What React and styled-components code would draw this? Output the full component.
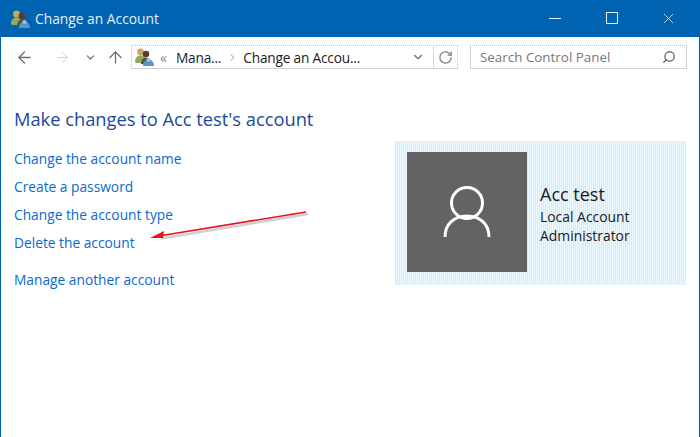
import React from "react";
import styled, { createGlobalStyle } from "styled-components";
import { ArrowLeft, ArrowRight, ArrowUp, ChevronDown, ChevronRight, RotateCw, Search, X } from "lucide-react";

const GlobalStyle = createGlobalStyle`
  html, body { margin: 0; padding: 0; background: #fff; }
  body { font-family: "Open Sans", "Noto Sans", "Liberation Sans", sans-serif; }
`;

const UsersIcon = ({ size = 20 }) => (
  <svg width={size} height={size} viewBox="0 0 20 20">
    <circle cx="6.500" cy="5" r="3.400" fill="#c9a86a" />
    <path d="M1 15c0-4 2-6.500 5.500-6.500S11 10 11 14l-4 2H2z" fill="#8fae62" />
    <circle cx="12" cy="7" r="3.300" fill="#5b3d2a" />
    <path d="M7 17c0-4 2-6.500 5-6.500 1 0 1.500.300 2 .600V17z" fill="#4d5a3a" />
    <path d="M9 19c0-4 2.500-6.500 5.500-6.500S20 15 20 19z" fill="#5b93c8" />
    <circle cx="14.500" cy="13" r="2" fill="#9cc3e4" />
  </svg>
);

const Window = styled.div`
  position: relative;
  width: 700px;
  height: 437px;
  box-sizing: border-box;
  border-left: 1px solid #0063b1;
  border-right: 1px solid #0063b1;
  overflow: hidden;
  background: #fff;
`;

const TitleBar = styled.div`
  height: 37px;
  background: #0063b1;
  display: flex;
  align-items: center;
  padding: 0 2px 0 9px;
  color: #e6f0f8;
`;

const TitleText = styled.span`
  font-size: 13.8px;
  margin-left: 5px;
  flex: 1;
`;

const WinButton = styled.div`
  width: 57px;
  height: 37px;
  display: flex;
  align-items: center;
  justify-content: center;
  margin-top: -1px;
  color: #e6f0f8;
`;

const MinGlyph = styled.div`
  width: 12px;
  height: 1px;
  background: #e6f0f8;
`;

const MaxGlyph = styled.div`
  width: 10px;
  height: 10px;
  border: 1px solid #e6f0f8;
`;

const Toolbar = styled.div`
  height: 36px;
  display: flex;
  align-items: center;
  padding-top: 4px;
  box-sizing: border-box;
`;

const NavButton = styled.div`
  width: ${(p) => p.$w}px;
  display: flex;
  justify-content: center;
  color: ${(p) => (p.$off ? "#c9c9c9" : "#6d6d6d")};
`;

const AddressBar = styled.div`
  width: 327px;
  height: 24px;
  margin-left: 4px;
  box-sizing: border-box;
  border: 1px dotted #c4c4c4;
  border-bottom: 1px solid #cfcfcf;
  display: flex;
  align-items: center;
  padding-left: 2px;
  font-size: 13.7px;
  color: #222;
`;

const Crumb = styled.span`
  white-space: nowrap;
  letter-spacing: -0.2px;
`;

const Chevrons = styled.span`
  color: #888;
  font-size: 14px;
  margin: 0 9px 0 6px;
`;

const CrumbArrow = styled(ChevronRight)`
  margin: 0 5px 0 6px;
  color: #888;
`;

const AddressEnd = styled.div`
  margin-left: auto;
  display: flex;
  align-items: center;
  height: 100%;
  color: #6d6d6d;
`;

const RefreshBox = styled.div`
  width: 23px;
  height: 100%;
  margin-left: 8px;
  border-left: 1px solid #d9d9d9;
  display: flex;
  align-items: center;
  justify-content: center;
  color: #808080;
`;

const SearchBox = styled.div`
  width: 217px;
  height: 24px;
  margin-left: 12px;
  box-sizing: border-box;
  border: 1px solid #d2d2d2;
  border-top: 1px dotted #c4c4c4;
  display: flex;
  align-items: center;
  justify-content: space-between;
  padding: 0 10px 0 9px;
  font-size: 13.4px;
  color: #777;
`;

const SearchGlyph = styled(Search)`
  transform: scaleX(-1);
  color: #666;
`;

const Content = styled.div`
  display: flex;
  justify-content: space-between;
  padding: 34px 13px 0 13px;
`;

const LeftColumn = styled.div`
  display: flex;
  flex-direction: column;
`;

const Heading = styled.h1`
  margin: 0 0 14px;
  font-size: 18.3px;
  line-height: 24px;
  font-weight: 400;
  color: #1a4a9c;
`;

const AccountLink = styled.a`
  height: 28px;
  line-height: 28px;
  font-size: 13.75px;
  color: #0a6ad0;
  margin-top: ${(p) => (p.$gap ? 9 : 0)}px;
`;

const Card = styled.div`
  width: 291px;
  height: 144px;
  margin-top: 34px;
  box-sizing: border-box;
  padding: 11px 12px;
  display: flex;
  background: repeating-linear-gradient(90deg, #cfeffc 0 1px, #ebf9ff 1px 2px);
`;

const Avatar = styled.div`
  width: 120px;
  height: 120px;
  background: #636363;
  display: flex;
  align-items: center;
  justify-content: center;
`;

const Info = styled.div`
  margin-left: 13px;
  padding-top: 31px;
  color: #1a1a1a;
`;

const Name = styled.div`
  font-size: 18px;
  line-height: 22px;
  margin-bottom: 2px;
`;

const Detail = styled.div`
  font-size: 13.9px;
  line-height: 19px;
`;

const Annotation = styled.svg`
  position: absolute;
  left: 140px;
  top: 200px;
`;

export default function App() {
  return (
    <>
      <GlobalStyle />
      <Window>
        <TitleBar>
          <UsersIcon />
          <TitleText>Change an Account</TitleText>
          <WinButton><MinGlyph /></WinButton>
          <WinButton><MaxGlyph /></WinButton>
          <WinButton><X size={17} strokeWidth={1.1} /></WinButton>
        </TitleBar>
        <Toolbar>
          <NavButton $w={46}><ArrowLeft size={19} strokeWidth={1.6} /></NavButton>
          <NavButton $w={30} $off><ArrowRight size={17} strokeWidth={1.2} /></NavButton>
          <NavButton $w={26}><ChevronDown size={13} strokeWidth={2.2} /></NavButton>
          <NavButton $w={24}><ArrowUp size={19} strokeWidth={1.6} /></NavButton>
          <AddressBar>
            <UsersIcon />
            <Chevrons>«</Chevrons>
            <Crumb>Mana...</Crumb>
            <CrumbArrow size={11} strokeWidth={2} />
            <Crumb>Change an Accou...</Crumb>
            <AddressEnd>
              <ChevronDown size={14} strokeWidth={2} />
              <RefreshBox><RotateCw size={15} strokeWidth={2} /></RefreshBox>
            </AddressEnd>
          </AddressBar>
          <SearchBox>
            Search Control Panel
            <SearchGlyph size={14} strokeWidth={2.2} />
          </SearchBox>
        </Toolbar>
        <Content>
          <LeftColumn>
            <Heading>Make changes to Acc test's account</Heading>
            <AccountLink>Change the account name</AccountLink>
            <AccountLink>Create a password</AccountLink>
            <AccountLink>Change the account type</AccountLink>
            <AccountLink>Delete the account</AccountLink>
            <AccountLink $gap>Manage another account</AccountLink>
          </LeftColumn>
          <Card>
            <Avatar>
              <svg width="48" height="54" viewBox="0 0 48 54" fill="none" stroke="#fff" strokeWidth="3">
                <circle cx="24" cy="18" r="15.500" />
                <path d="M2 52c0-13 9-21 22-21s22 8 22 21" />
              </svg>
            </Avatar>
            <Info>
              <Name>Acc test</Name>
              <Detail>Local Account</Detail>
              <Detail>Administrator</Detail>
            </Info>
          </Card>
        </Content>
        <Annotation width="175" height="45" viewBox="0 0 175 45">
          <path d="M167 14 L20 38.500" stroke="#d0d0d0" strokeWidth="2.500" fill="none" />
          <path d="M165 12 L18 36" stroke="#e8131b" strokeWidth="1.700" fill="none" />
          <path d="M9 38 L23 31 L22 38 Z" fill="#e8131b" />
        </Annotation>
      </Window>
    </>
  );
}
